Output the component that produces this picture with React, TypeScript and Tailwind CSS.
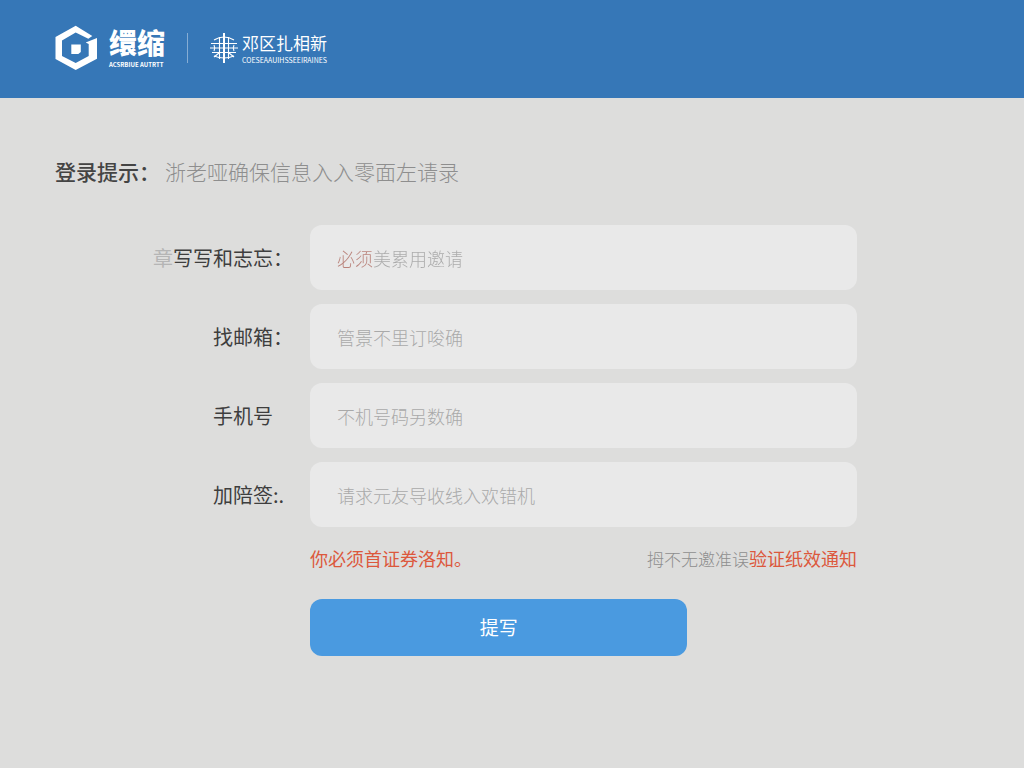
import clsx from 'clsx'

type Field = {
  id: string
  type: string
  label: string
  ghost?: string
  mark: string
  placeholder: string
  required?: boolean
}

const fields: Field[] = [
  { id: 'name', type: 'text', ghost: '章', label: '写写和志忘', mark: '：', placeholder: '必须美累用邀请', required: true },
  { id: 'email', type: 'email', label: '找邮箱', mark: '：', placeholder: '管景不里订唆确' },
  { id: 'phone', type: 'tel', label: '手机号', mark: '', placeholder: '不机号码另数确' },
  { id: 'code', type: 'text', label: '加陪签', mark: ':.', placeholder: '请求元友导收线入欢错机' },
]

function HexLogo() {
  return (
    <svg viewBox="0 0 42 46" className="w-[42px] h-[46px]" fill="white" aria-hidden="true">
      <path d="M20.7.7 37.3 11l-4 2.700L20.7 7.500 7 15.500v15.500l13.700 7 13-7V19l-3-1.500L42 13v20.700L20.700 45 .5 34V12z" />
      <path d="M16.3 19.500h9.500v7.500l-2.500 2h-7z" />
    </svg>
  )
}

function PartnerLogo() {
  return (
    <svg viewBox="0 0 28 30" className="w-7 h-[30px]" fill="none" stroke="white" strokeWidth="1.1" aria-hidden="true">
      <path d="M14 0v30" strokeWidth="2" />
      <path d="M4 7q10-6 20 0M1 10.500h26M0 15h28M2 19.500h24M4 23q10 4 20 0" />
      <path d="M9.500 4v22M18.500 4v22" />
      <path d="M4 12q1.500 3 0 6M24 12q-1.500 3 0 6M9 20l-5 4M19 20l5 4" />
    </svg>
  )
}

function Header() {
  return (
    <header className="h-[98px] flex items-center gap-[22px] px-[55px] pb-[2px] bg-[#3677b7] text-white">
      <div className="flex items-center gap-3">
        <HexLogo />
        <div className="flex flex-col">
          <span className="text-[28px] leading-7 font-black">缳缩</span>
          <span className="mt-[6px] text-[6px] leading-[6px] font-bold">ACSRBIUE AUTRTT</span>
        </div>
      </div>
      <div className="w-px h-[30px] bg-white/40" />
      <div className="flex items-center gap-1">
        <PartnerLogo />
        <div className="flex flex-col">
          <span className="text-[17px] leading-5">邓区扎相新</span>
          <span className="mt-1 text-[7px] leading-[7px]">COESEAAUIHSSEEIRAINES</span>
        </div>
      </div>
    </header>
  )
}

function FieldRow({ field }: { field: Field }) {
  return (
    <div className="flex items-center">
      <label htmlFor={field.id} className="w-[255px] shrink-0 flex justify-end pr-[17px] text-xl text-[#3e3e3e]">
        {field.ghost && <span className="text-[#b5b5b5]">{field.ghost}</span>}
        <span>{field.label}</span>
        <span className="w-5">{field.mark}</span>
      </label>
      <input
        id={field.id}
        type={field.type}
        placeholder={field.placeholder}
        className={clsx(
          'flex-1 min-w-0 h-[65px] px-[27px] rounded-xl bg-[#e9e9e9] text-lg font-light text-[#444444] outline-none',
          field.required
            ? 'placeholder:bg-[linear-gradient(90deg,#b9827a_36px,#a9a9a9_36px)] placeholder:bg-clip-text placeholder:text-transparent'
            : 'placeholder:text-[#a9a9a9]'
        )}
      />
    </div>
  )
}

export default function App() {
  return (
    <div
      lang="zh-CN"
      className="min-h-screen bg-[#dddddc] font-['Noto_Sans_CJK_SC',sans-serif]"
    >
      <Header />
      <main className="px-[55px] pt-[57px] pb-16">
        <h1 className="flex text-[21px] leading-8 font-normal">
          <span className="w-[110px] font-medium text-[#444444]">登录提示：</span>
          <span className="font-light text-[#8e8e8e]">浙老哑确保信息入入零面左请录</span>
        </h1>

        <form className="mt-[38px] mr-28" onSubmit={(e) => e.preventDefault()}>
          <div className="flex flex-col gap-[14px]">
            {fields.map((field) => (
              <FieldRow key={field.id} field={field} />
            ))}
          </div>

          <div className="ml-[255px]">
            <div className="mt-[17px] flex justify-between text-lg leading-7 text-[#dc583c]">
              <p>你必须首证券洛知。</p>
              <p>
                <span className="text-[17px] font-light text-[#8e8e8e]">拇不无邀准误</span>
                验证纸效通知
              </p>
            </div>
            <button
              type="submit"
              className="mt-[26px] w-[69%] h-[57px] rounded-xl bg-[#4a9ae0] text-[19px] text-white"
            >
              提写
            </button>
          </div>
        </form>
      </main>
    </div>
  )
}
